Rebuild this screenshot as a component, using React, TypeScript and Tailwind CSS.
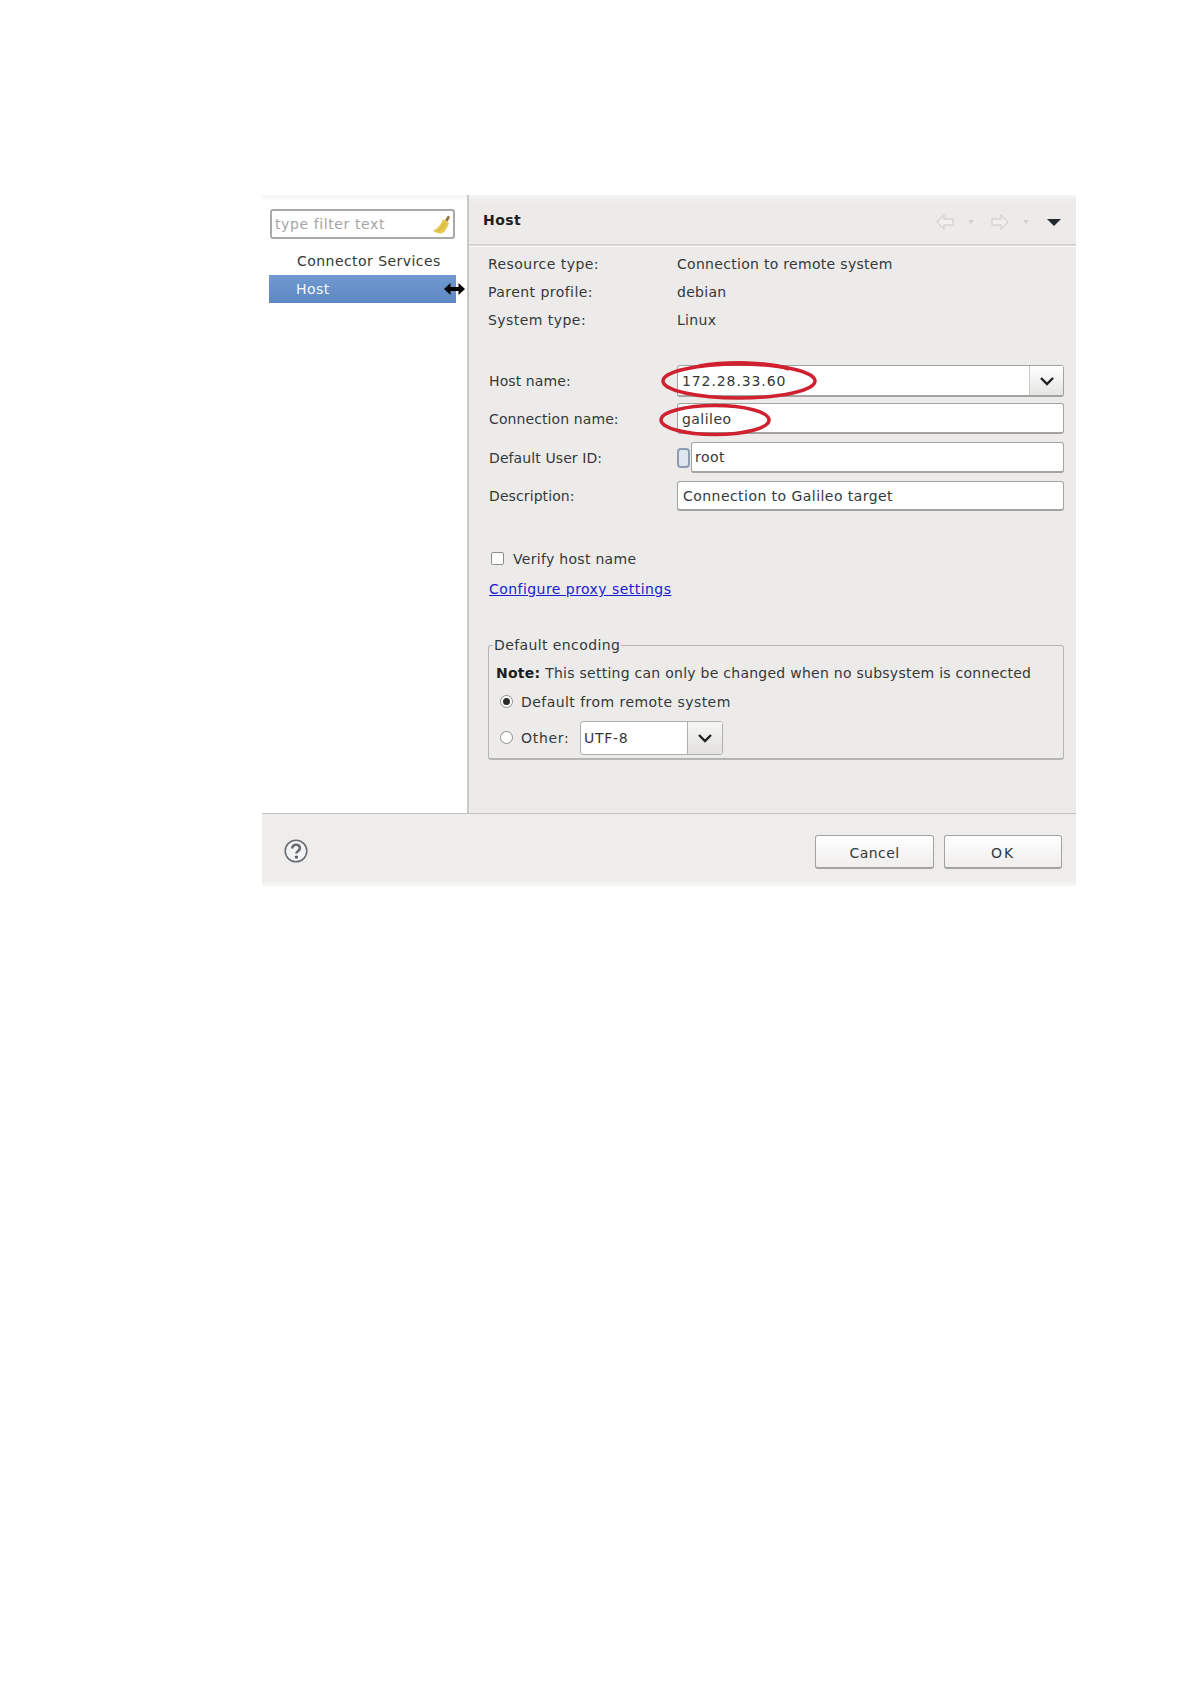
function Chevron() {
  return (
    <svg width="16" height="10" viewBox="0 0 16 10" fill="none" stroke="#1f2326" strokeWidth="2.4">
      <path d="M2 2l6 6 6-6" />
    </svg>
  );
}

function NavArrow({ dir }: { dir: "left" | "right" }) {
  return (
    <svg width="18" height="16" viewBox="0 0 18 16" fill="#f1f0ef" stroke="#d6d5d3" strokeWidth="1.4">
      {dir === "left" ? <path d="M1 8l7-7v4h9v6H8v4z" /> : <path d="M17 8l-7-7v4H1v6h9v4z" />}
    </svg>
  );
}

function SmallDrop() {
  return <span className="h-0 w-0 border-x-[3px] border-t-[4px] border-x-transparent border-t-[#cfcecc]" />;
}

function InfoRow({ label, value }: { label: string; value: string }) {
  return (
    <div className="flex h-[28px] items-center pt-[1px]">
      <div className="w-[189px]">{label}</div>
      <div className="tracking-[0.3px]">{value}</div>
    </div>
  );
}

const boxClass = "rounded-[3px] border border-[#a3a3a1] border-b-[2px] bg-white";
const labelClass = "w-[189px] pl-[1px] pt-[1px] tracking-[0.1px]";

export default function App() {
  return (
    <div className="min-h-[1684px] bg-white pl-[262px] pt-[195px] font-['DejaVu_Sans',sans-serif] text-[14px] tracking-[0.45px] text-[#34383a]">
      <div className="flex h-[691px] w-[814px] flex-col">
        <div className="flex h-[618px]">
          {/* Left filter + tree */}
          <div className="w-[205px] bg-gradient-to-b from-[#f3f3f3] to-white to-[6px]">
            <div className="px-[8px] pt-[14px]">
              <div className="flex h-[30px] w-[185px] items-center justify-between rounded-[3px] border-2 border-[#a9a9a9] bg-white pl-[3px] pr-[2px] pt-[1px] tracking-[0.6px] text-[#a4a4a4]">
                <span>type filter text</span>
                <svg width="19" height="21" viewBox="0 0 19 21">
                  <path d="M13 6l3-4.500 2 1.500-2.500 5z" fill="#9a7440" />
                  <path d="M11 5l6 4c-1 4-4 8-6 10-1 0-2 .5-3 .5-1-.5-3-.5-4-1-1-.5-2-1-3-2 4-1 8-6 10-11.500z" fill="#e6c84f" />
                  <path d="M6 17c2-1 5-4 7-8" fill="none" stroke="#c9a636" strokeWidth="1" />
                </svg>
              </div>
            </div>
            <div className="mt-[8px] flex h-[28px] items-center pl-[35px]">Connector Services</div>
            <div className="relative ml-[7px] flex h-[28px] w-[187px] items-center bg-gradient-to-b from-[#7199d2] to-[#5f88c2] pl-[27px] text-[#f4f7fb]">
              Host
              <svg className="absolute left-[175px] top-[7px]" width="21" height="14" viewBox="0 0 21 14" fill="#000">
                <path d="M0 7l6.500-6v4h8V1L21 7l-6.500 6V9h-8v4z" />
              </svg>
            </div>
          </div>

          {/* Right page */}
          <div className="flex flex-1 flex-col border-l-2 border-[#c9c9c7] bg-[#ecebea]">
            <div className="flex h-[51px] items-center justify-between border-b-2 border-b-[#d5d4d2] bg-gradient-to-b from-[#f6f6f5] to-[#ecebea] to-[7px] pl-[14px] pr-[15px]">
              <span className="pt-[2px] font-bold text-[#1c1e1f]">Host</span>
              <div className="mt-[5px] flex items-center">
                <NavArrow dir="left" />
                <span className="ml-[14px] flex"><SmallDrop /></span>
                <span className="ml-[17px] flex"><NavArrow dir="right" /></span>
                <span className="ml-[14px] flex"><SmallDrop /></span>
                <span className="ml-[18px] h-0 w-0 border-x-[7px] border-t-[7px] border-x-transparent border-t-[#24292e]" />
              </div>
            </div>
            <div className="border-t border-white pl-[19px] pr-[12px] pt-[3px]">
              <InfoRow label="Resource type:" value="Connection to remote system" />
              <InfoRow label="Parent profile:" value="debian" />
              <InfoRow label="System type:" value="Linux" />

              <div className="relative mt-[31px] flex h-[32px] items-center">
                <div className="w-[189px] pl-[1px] tracking-[0.1px]">Host name:</div>
                <div className={`flex h-full flex-1 items-center ${boxClass}`}>
                  <span className="flex-1 pl-[4px] pt-[1px] tracking-[0.9px]">172.28.33.60</span>
                  <div className="flex h-full w-[34px] items-center justify-center border-l border-[#c8c8c6] bg-gradient-to-b from-white to-[#e6e5e4]">
                    <Chevron />
                  </div>
                </div>
                <svg className="absolute left-[171px] top-[-5px]" width="160" height="42" viewBox="0 0 160 42" fill="none" stroke="#cf2130" strokeWidth="3.500">
                  <ellipse cx="80" cy="21" rx="76" ry="17" />
                  <path d="M40 6c30-5 70-4 90 3" />
                </svg>
              </div>
              <div className="relative mt-[6px] flex h-[31px] items-center">
                <div className={labelClass}>Connection name:</div>
                <div className={`flex h-full flex-1 items-center pl-[4px] pt-[2px] ${boxClass}`}>galileo</div>
                <svg className="absolute left-[170px] top-[0px]" width="114" height="34" viewBox="0 0 114 34" fill="none" stroke="#cf2130" strokeWidth="3.500">
                  <ellipse cx="57" cy="17" rx="54" ry="14.500" />
                </svg>
              </div>
              <div className="mt-[8px] flex h-[31px] items-center">
                <div className={labelClass}>Default User ID:</div>
                <div className="mr-[1px] h-[20px] w-[13px] rounded-[4px] border-2 border-[#8e9cb0] bg-[#dfe5ef]" />
                <div className={`flex h-full flex-1 items-center pl-[3px] pt-[1px] ${boxClass}`}>root</div>
              </div>
              <div className="mt-[8px] flex h-[30px] items-center">
                <div className={labelClass}>Description:</div>
                <div className={`flex h-full flex-1 items-center pl-[5px] pt-[1px] ${boxClass}`}>Connection to Galileo target</div>
              </div>

              <div className="mt-[42px] flex h-[12px] items-center pl-[3px]">
                <span className="mt-[-2px] h-[13px] w-[13px] rounded-[2px] border border-[#8d8d8b] bg-white" />
                <span className="ml-[9px] tracking-[0.3px]">Verify host name</span>
              </div>
              <div className="mt-[15px] pl-[1px] leading-[18px]">
                <a className="text-[#1a1ad0] underline">Configure proxy settings</a>
              </div>

              <fieldset className="mt-[37px] h-[125px] rounded-[3px] border border-[#b5b5b3] border-b-[2px] pl-[7px]">
                <legend className="ml-[-3px] px-[1px] leading-[20px] tracking-[0.4px]">Default encoding</legend>
                <div className="mt-[9px] leading-[18px] tracking-[0.26px]"><b className="text-[#1c1e1f]">Note:</b> This setting can only be changed when no subsystem is connected</div>
                <div className="mt-[11px] flex h-[18px] items-center pl-[4px]">
                  <span className="mt-[-1px] flex h-[13px] w-[13px] items-center justify-center rounded-full border border-[#8d8d8b] bg-white">
                    <span className="h-[7px] w-[7px] rounded-full bg-[#2b2b2b]" />
                  </span>
                  <span className="ml-[8px]">Default from remote system</span>
                </div>
                <div className="mt-[10px] flex h-[34px] items-center pl-[4px]">
                  <span className="mt-[-2px] h-[13px] w-[13px] rounded-full border border-[#8d8d8b] bg-white" />
                  <span className="ml-[8px] w-[59px] tracking-[0.7px]">Other:</span>
                  <div className="flex h-full w-[143px] items-center rounded-[3px] border border-[#b0b0ae] bg-white">
                    <span className="flex-1 pl-[3px] tracking-[0.7px]">UTF-8</span>
                    <div className="flex h-full w-[35px] items-center justify-center border-l border-[#b0b0ae] bg-gradient-to-b from-[#f6f6f5] to-[#e2e1e0]">
                      <Chevron />
                    </div>
                  </div>
                </div>
              </fieldset>
            </div>
          </div>
        </div>

        {/* Footer */}
        <div className="flex flex-1 items-center justify-between border-t border-[#c4c4c2] bg-gradient-to-t from-[#f7f7f6] to-[#eeedec] to-[6px] pl-[22px] pr-[14px]">
          <svg className="mt-[1px]" width="24" height="24" viewBox="0 0 24 24" fill="#f3f3f3" stroke="#666c72" strokeWidth="1.500">
            <circle cx="12" cy="12" r="10.800" />
            <path d="M8.200 9.500c0-2.600 1.700-3.700 3.900-3.700s3.800 1.300 3.800 3.400c0 2.800-3.500 2.700-3.500 5.300" fill="none" strokeWidth="2.600" />
            <circle cx="12.400" cy="18" r="1.600" fill="#4f5459" stroke="none" />
          </svg>
          <div className="mt-[4px] flex gap-[10px]">
            <div className="flex h-[34px] w-[119px] items-center justify-center rounded-[3px] border border-[#a3a3a1] border-b-[2px] bg-gradient-to-b from-white to-[#efeeed] pt-[3px]">Cancel</div>
            <div className="flex h-[34px] w-[118px] items-center justify-center rounded-[3px] border border-[#a3a3a1] border-b-[2px] bg-gradient-to-b from-white to-[#efeeed] pt-[3px] tracking-[2px]">OK</div>
          </div>
        </div>
      </div>
    </div>
  );
}
